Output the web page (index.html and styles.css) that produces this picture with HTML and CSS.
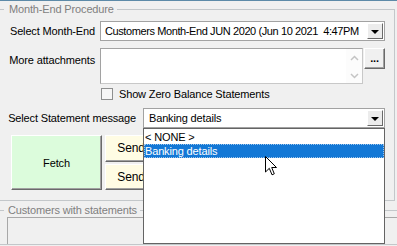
FILE: index.html
```html
<!DOCTYPE html>
<html lang="en">
<head>
  <meta charset="UTF-8" />
  <title>Month-End Procedure</title>
  <link rel="stylesheet" href="styles.css">
</head>
<body>
  <div class="topline"></div>

  <fieldset class="group procedure">
    <legend>Month-End Procedure</legend>
    <div class="inner">
      <div class="row r-month">
        <label class="lbl">Select Month-End</label>
        <div class="combo month">
          <span class="combo-text">Customers Month-End JUN 2020 (Jun 10 2021&nbsp; 4:47PM</span>
          <span class="combo-btn"><i class="tri"></i></span>
        </div>
      </div>

      <div class="row r-attach">
        <label class="lbl top">More attachments</label>
        <div class="memo">
          <div class="memo-scroll">
            <svg width="9" height="6" viewBox="0 0 9 6"><path d="M1 5 L4.5 1.5 L8 5" fill="none" stroke="#c4c4c4" stroke-width="1.5"/></svg>
            <svg width="9" height="6" viewBox="0 0 9 6"><path d="M1 1 L4.5 4.5 L8 1" fill="none" stroke="#c4c4c4" stroke-width="1.5"/></svg>
          </div>
        </div>
        <button class="btn dots">...</button>
      </div>

      <div class="row r-check">
        <span class="checkbox"></span>
        <span class="check-text">Show Zero Balance Statements</span>
      </div>

      <div class="row r-msg">
        <label class="lbl wide">Select Statement message</label>
        <div class="combo msg">
          <span class="combo-text">Banking details</span>
          <span class="combo-btn"><i class="tri"></i></span>
          <ul class="droplist">
            <li>&lt; NONE &gt;</li>
            <li class="sel">Banking details</li>
          </ul>
        </div>
      </div>

      <div class="row actions">
        <button class="btn fetch">Fetch</button>
        <div class="sends">
          <button class="btn send">Send</button>
          <button class="btn send">Send</button>
        </div>
      </div>
    </div>
  </fieldset>

  <fieldset class="group customers">
    <legend>Customers with statements</legend>
    <div class="list"></div>
  </fieldset>

  <svg class="cursor" width="13" height="20" viewBox="0 0 13 20">
    <path d="M0.5 0.5 L0.5 16 L4.3 12.3 L7 18.8 L9.3 17.8 L6.7 11.5 L11.5 11.5 Z" fill="#fff" stroke="#000" stroke-width="1"/>
  </svg>
</body>
</html>
```

FILE: styles.css
```css
html, body {
  margin: 0;
  padding: 0;
}
body {
  background: #f0f0f0;
  color: #000;
  font-family: "Liberation Sans", Arial, sans-serif;
  font-size: 11px;
  letter-spacing: -0.15px;
  width: 397px;
  height: 246px;
  overflow: hidden;
  position: relative;
}
.topline {
  height: 1px;
  background: #5d8aa8;
}
.group {
  margin: 1px 2px 0 -4px;
  padding: 0;
  border: 1px solid #c3c7ca;
  min-width: 0;
}
.group legend {
  margin-left: 7px;
  padding: 0 3px 0 5px;
  line-height: 14px;
  color: #7f7f7f;
}
.customers {
  margin: 2px -10px 0 -4px;
}
.customers legend {
  padding-left: 4px;
}
.inner {
  padding: 5px 0 10px 11px;
}
.row {
  display: flex;
  align-items: center;
}
.lbl {
  width: 87px;
  margin-right: 5px;
  text-align: right;
  white-space: nowrap;
}
.lbl.top {
  align-self: flex-start;
  padding-top: 6px;
}
.lbl.wide {
  width: 128px;
  margin-right: 7px;
}
.combo {
  position: relative;
  height: 20px;
  box-sizing: border-box;
  border: 1px solid #a2a2a2;
  background: #fff;
  display: flex;
  align-items: center;
  padding-left: 4px;
}
.combo.month {
  width: 285px;
}
.combo.month .combo-text {
  letter-spacing: -0.4px;
}
.combo.msg {
  width: 242px;
}
.combo-text {
  flex: 1;
  white-space: nowrap;
  overflow: hidden;
}
.combo-btn {
  width: 16px;
  height: 16px;
  box-sizing: border-box;
  margin-right: 1px;
  background: #ececec;
  border: 1px solid;
  border-color: #fff #6a6a6a #6a6a6a #fff;
  display: flex;
  align-items: center;
  justify-content: center;
}
.tri {
  width: 0;
  height: 0;
  border-left: 4px solid transparent;
  border-right: 4px solid transparent;
  border-top: 4px solid #000;
  margin-top: 1px;
}
.r-attach {
  margin-top: 7px;
  align-items: flex-start;
}
.memo {
  width: 263px;
  height: 36px;
  box-sizing: border-box;
  border: 1px solid #a2a2a2;
  border-right-color: #c8c8c8;
  border-bottom-color: #c8c8c8;
  background: #fff;
  display: flex;
  justify-content: flex-end;
}
.memo-scroll {
  width: 16px;
  display: flex;
  flex-direction: column;
  align-items: center;
  justify-content: space-between;
  padding: 6px 0 4px;
  background: #fcfcfc;
}
.btn {
  font-family: inherit;
  font-size: 11px;
  letter-spacing: inherit;
  color: #000;
  padding: 0;
  border: 1px solid;
  border-color: #fff #6a6a6a #6a6a6a #fff;
  box-shadow: inset -1px -1px #a0a0a0;
  background: #f0f0f0;
}
.dots {
  width: 21px;
  height: 21px;
  margin-left: 1px;
  font-weight: bold;
  line-height: 14px;
  padding-bottom: 2px;
}
.r-check {
  margin-top: 3px;
  height: 14px;
}
.checkbox {
  width: 12px;
  height: 12px;
  box-sizing: border-box;
  margin-left: 93px;
  border: 1px solid #8e8f8f;
  background: #f6f6f6;
}
.check-text {
  margin-left: 6px;
}
.r-msg {
  margin-top: 7px;
}
.combo.msg .combo-text {
  padding-left: 1px;
}
.droplist {
  position: absolute;
  left: -1px;
  top: 19px;
  width: 242px;
  height: 116px;
  box-sizing: border-box;
  margin: 0;
  padding: 1px 0 0;
  list-style: none;
  background: #fff;
  border: 1px solid #646464;
  z-index: 2;
}
.droplist li {
  height: 14px;
  line-height: 14px;
  padding-left: 1px;
  box-sizing: border-box;
  white-space: nowrap;
}
.droplist li.sel {
  background: #1378d6;
  color: #fff;
  outline: 1px dotted #9cc4ea;
  outline-offset: -1px;
}
.actions {
  margin-top: 7px;
  align-items: stretch;
  height: 55px;
}
.fetch {
  width: 91px;
  margin-left: 3px;
  background: #dcfcdc;
}
.sends {
  display: flex;
  flex-direction: column;
  gap: 2px;
  margin-left: 3px;
  width: 52px;
}
.send {
  flex: 1;
  font-size: 12px;
  background: #fffce4;
}
.list {
  margin-left: 10px;
  height: 26px;
  border: 1px solid #a8a8a8;
  border-right: none;
  border-bottom: none;
  background: #f0f0f0;
}
.cursor {
  position: absolute;
  left: 265px;
  top: 156px;
  z-index: 5;
}
```
